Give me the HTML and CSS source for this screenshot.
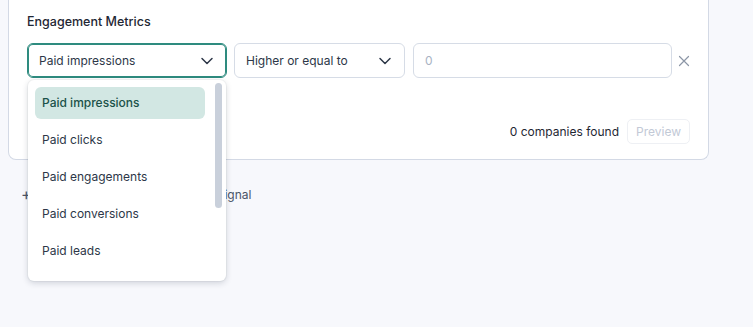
FILE: index.html
```html
<!DOCTYPE html>
<html lang="en">
<head>
    <meta charset="UTF-8">
    <title>Engagement Metrics</title>
    <link rel="stylesheet" href="styles.css">
</head>
<body>

    <div class="card">
        <div class="card-title">Engagement Metrics</div>

        <div class="filter-row">
            <div class="field">
                <div class="select select-open">
                    <span>Paid impressions</span>
                    <svg class="chevron" width="14" height="14" viewBox="0 0 14 14"><path d="M2 4.5 7 9.5 12 4.5" /></svg>
                </div>

                <div class="dropdown">
                    <ul class="option-list">
                        <li class="option active">Paid impressions</li>
                        <li class="option">Paid clicks</li>
                        <li class="option">Paid engagements</li>
                        <li class="option">Paid conversions</li>
                        <li class="option">Paid leads</li>
                    </ul>
                    <div class="scroll-thumb"></div>
                </div>
            </div>

            <div class="select select-op">
                <span>Higher or equal to</span>
                <svg class="chevron" width="14" height="14" viewBox="0 0 14 14"><path d="M2 4.5 7 9.5 12 4.5" /></svg>
            </div>

            <div class="value-input">0</div>

            <svg class="remove" width="12" height="12" viewBox="0 0 12 12"><path d="M1.5 1.5 10.5 10.5M10.5 1.5 1.5 10.5" /></svg>
        </div>

        <div class="card-footer">
            <span class="found">0 companies found</span>
            <button class="preview">Preview</button>
        </div>
    </div>

    <div class="add-signal">
        <span class="plus">+</span>
        <span>Add an additional engagement signal</span>
    </div>

</body>
</html>
```

FILE: styles.css
```css
html, body {
    min-height: 100%;
}

body {
    margin: 0;
    padding: 0 8px;
    min-height: 327px;
    background-color: #f7f8fc;
    font-family: Inter, "Noto Sans", sans-serif;
    font-size: 12px;
    color: #2d3748;
}

.card {
    box-sizing: border-box;
    width: 701px;
    background-color: #fff;
    border: 1px solid #d3d9e5;
    border-top: none;
    border-radius: 0 0 8px 8px;
    padding: 13px 18px 15px 18px;
}

.card-title {
    font-size: 12.5px;
    line-height: 18px;
    font-weight: 500;
    color: #1f2733;
    margin-bottom: 12px;
}

.filter-row {
    display: flex;
    align-items: center;
}

.filter-row > * {
    flex-shrink: 0;
}

.field {
    position: relative;
}

.select {
    display: flex;
    align-items: center;
    justify-content: space-between;
    box-sizing: border-box;
    height: 35px;
    padding: 0 12px 0 11px;
    border: 1px solid #d6dce6;
    border-radius: 6px;
    background-color: #fff;
    color: #2d3748;
}

.select-open {
    width: 200px;
    border-color: #2e8b7f;
    box-shadow: 0 0 0 1px #2e8b7f inset;
}

.select-op {
    width: 171px;
    margin-left: 7px;
}

.chevron path {
    fill: none;
    stroke: #2d3748;
    stroke-width: 1.5;
    stroke-linecap: round;
    stroke-linejoin: round;
}

.value-input {
    box-sizing: border-box;
    width: 259px;
    height: 35px;
    line-height: 33px;
    margin-left: 8px;
    padding: 0 11px;
    border: 1px solid #d6dce6;
    border-radius: 6px;
    color: #a9b3c4;
}

.remove {
    margin-left: 6px;
}

.remove path {
    stroke: #8c96a6;
    stroke-width: 1.2;
    stroke-linecap: round;
}

.card-footer {
    display: flex;
    justify-content: flex-end;
    align-items: center;
    gap: 8px;
    margin-top: 41px;
}

.found {
    color: #1f2733;
}

.preview {
    height: 25px;
    padding: 0 8px;
    border: 1px solid #eef0f4;
    border-radius: 5px;
    background-color: #fff;
    font-family: inherit;
    font-size: 12px;
    color: #c2c9d6;
}

.dropdown {
    position: absolute;
    top: 37px;
    left: 1px;
    width: 198px;
    height: 201px;
    box-sizing: border-box;
    background-color: #fff;
    border-radius: 6px;
    box-shadow: 0 2px 6px rgba(30, 40, 60, 0.18), 0 0 0 1px rgba(30, 40, 60, 0.04);
    overflow: hidden;
    z-index: 2;
}

.option-list {
    list-style: none;
    margin: 0;
    padding: 7px 21px 0 7px;
}

.option {
    height: 32px;
    line-height: 32px;
    padding: 0 7px;
    margin-bottom: 5px;
    border-radius: 6px;
    color: #2d3748;
}

.option.active {
    background-color: #d2e7e3;
    color: #1b5249;
    font-weight: 500;
}

.scroll-thumb {
    position: absolute;
    top: 3px;
    right: 4px;
    width: 7px;
    height: 125px;
    border-radius: 4px;
    background-color: #c9d0db;
}

.add-signal {
    display: flex;
    align-items: center;
    gap: 10px;
    margin-top: 24px;
    padding-left: 13px;
    color: #4a5568;
}

.plus {
    font-size: 16px;
}
```
